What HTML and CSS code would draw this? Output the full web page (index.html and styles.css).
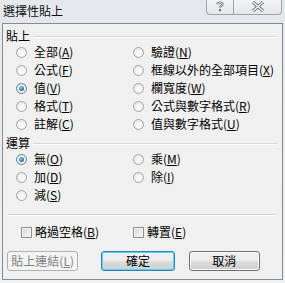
FILE: index.html
```html
<!DOCTYPE html>
<html>
<head>
  <meta charset="UTF-8" />
  <title>選擇性貼上</title>
  <link rel="stylesheet" href="styles.css">
</head>
<body>

  <div class="frame">
    <div class="title-bar">
      <div class="title">選擇性貼上</div>
      <div class="caption-btns">
        <div class="cap help">
          <svg width="10" height="11" viewBox="0 0 10 11">
            <path d="M2.5 3.2 C2.5 1.2 7.5 1.2 7.5 3.2 C7.5 4.8 5 5 5 6.8" fill="none" stroke="#6d7378" stroke-width="2.2"/>
            <path d="M2.5 3.2 C2.5 1.2 7.5 1.2 7.5 3.2 C7.5 4.8 5 5 5 6.8" fill="none" stroke="#fff" stroke-width="0.8"/>
            <rect x="3.9" y="8" width="2.2" height="2.2" fill="#6d7378"/>
          </svg>
        </div>
        <div class="cap close">
          <svg width="14" height="11" viewBox="0 0 14 11">
            <path d="M2 1 L12 10 M12 1 L2 10" stroke="#6d7378" stroke-width="3.2"/>
            <path d="M2 1 L12 10 M12 1 L2 10" stroke="#f4f4f4" stroke-width="1.4"/>
          </svg>
        </div>
      </div>
    </div>

    <div class="client">
      <div class="group-head"><span>貼上</span><div class="rule"></div></div>
      <div class="opts">
        <label class="opt"><span class="radio"></span>全部(<u>A</u>)</label>
        <label class="opt"><span class="radio"></span>驗證(<u>N</u>)</label>
        <label class="opt"><span class="radio"></span>公式(<u>F</u>)</label>
        <label class="opt"><span class="radio"></span>框線以外的全部項目(<u>X</u>)</label>
        <label class="opt"><span class="radio on"></span>值(<u>V</u>)</label>
        <label class="opt"><span class="radio"></span>欄寬度(<u>W</u>)</label>
        <label class="opt"><span class="radio"></span>格式(<u>T</u>)</label>
        <label class="opt"><span class="radio"></span>公式與數字格式(<u>R</u>)</label>
        <label class="opt"><span class="radio"></span>註解(<u>C</u>)</label>
        <label class="opt"><span class="radio"></span>值與數字格式(<u>U</u>)</label>
      </div>

      <div class="group-head second"><span>運算</span><div class="rule"></div></div>
      <div class="opts">
        <label class="opt"><span class="radio on"></span>無(<u>O</u>)</label>
        <label class="opt"><span class="radio"></span>乘(<u>M</u>)</label>
        <label class="opt"><span class="radio"></span>加(<u>D</u>)</label>
        <label class="opt"><span class="radio"></span>除(<u>I</u>)</label>
        <label class="opt"><span class="radio"></span>減(<u>S</u>)</label>
      </div>

      <div class="sep"></div>

      <div class="checks">
        <label class="chk"><span class="box"></span>略過空格(<u>B</u>)</label>
        <label class="chk"><span class="box"></span>轉置(<u>E</u>)</label>
      </div>

      <div class="buttons">
        <button class="btn disabled">貼上連結(<u>L</u>)</button>
        <button class="btn default">確定</button>
        <button class="btn">取消</button>
      </div>
    </div>
  </div>

</body>
</html>
```

FILE: styles.css
```css
body { margin: 0; background: #e9ecef; font-family: "Noto Sans CJK TC", "Noto Sans", sans-serif; font-size: 12px; color: #000; }
u { text-decoration: underline; text-underline-offset: 1px; }

.frame { width: 285px; height: 283px; background: linear-gradient(#e4e8ec, #eef0f2); overflow: hidden; }
.title-bar { height: 23px; display: flex; justify-content: space-between; align-items: flex-start; }
.title { padding: 4px 0 0 3px; line-height: 14px; color: #111; }

.caption-btns {
  display: flex; margin-right: 3px; margin-top: -1px;
  border: 1px solid #9ea3a8; border-top: none;
  border-radius: 0 0 4px 4px; height: 15px;
  background: linear-gradient(#f4f5f6, #e3e6e9);
}
.cap { display: flex; align-items: center; justify-content: center; }
.help { width: 26px; border-right: 1px solid #9ea3a8; }
.close { width: 47px; }

.client {
  margin: 0 2px; height: 257px; box-sizing: border-box;
  border: 1px solid #858a8f; background: #f0f0f0;
}

.group-head { display: flex; align-items: center; height: 14px; margin-top: 5px; padding-left: 3px; line-height: 14px; }
.group-head.second { margin-top: 3px; }
.rule { flex: 1; margin: 1px 5px 0 3px; border-top: 1px solid #d5d5d5; border-bottom: 1px solid #fff; }

.opts { display: grid; grid-template-columns: 117px 1fr; padding-left: 13px; }
.opt, .chk { display: flex; align-items: center; height: 18px; line-height: 14px; white-space: nowrap; }

.radio {
  position: relative; width: 11px; height: 11px; margin-right: 7px;
  box-sizing: border-box; border-radius: 50%; border: 1px solid #a3a6a8;
  background: radial-gradient(circle at 55% 60%, #f8f8f8 30%, #dadcdd 100%);
}
.radio.on { border-color: #6a7a88; }
.radio.on::after {
  content: ""; position: absolute; left: 2px; top: 2px; width: 5px; height: 5px; border-radius: 50%;
  background: radial-gradient(circle at 40% 35%, #7fd0f6, #2a7ab8 60%, #14466f);
}

.sep { margin: 10px 5px 0 5px; border-top: 1px solid #d5d5d5; border-bottom: 1px solid #fff; }

.checks { display: grid; grid-template-columns: 112px 1fr; padding-left: 18px; margin-top: 7px; }
.box {
  width: 11px; height: 11px; margin-right: 3px; box-sizing: border-box;
  border: 1px solid #8f9294; background: linear-gradient(135deg, #d8dadc, #f6f6f6);
  box-shadow: inset 0 0 0 1px #f0f0f0;
}

.buttons { display: flex; padding-left: 4px; margin-top: 10px; }
.btn {
  width: 76px; height: 20px; padding: 0; margin-right: 22px;
  font-family: inherit; font-size: 12px; line-height: 14px; color: #000;
  border: 1px solid #707070; border-radius: 3px;
  background: linear-gradient(#f2f2f2 0%, #ebebeb 50%, #dddddd 51%, #cfcfcf 100%);
  box-shadow: inset 0 0 0 1px #fcfcfc;
}
.btn.default { width: 78px; margin-right: 14px; border-color: #3c7fb1; box-shadow: inset 0 0 0 1px #48d8fb; }
.btn.disabled { width: 76px; margin-right: 23px; color: #838383; border-color: #adb2b5; background: #f4f4f4; box-shadow: none; }
```
